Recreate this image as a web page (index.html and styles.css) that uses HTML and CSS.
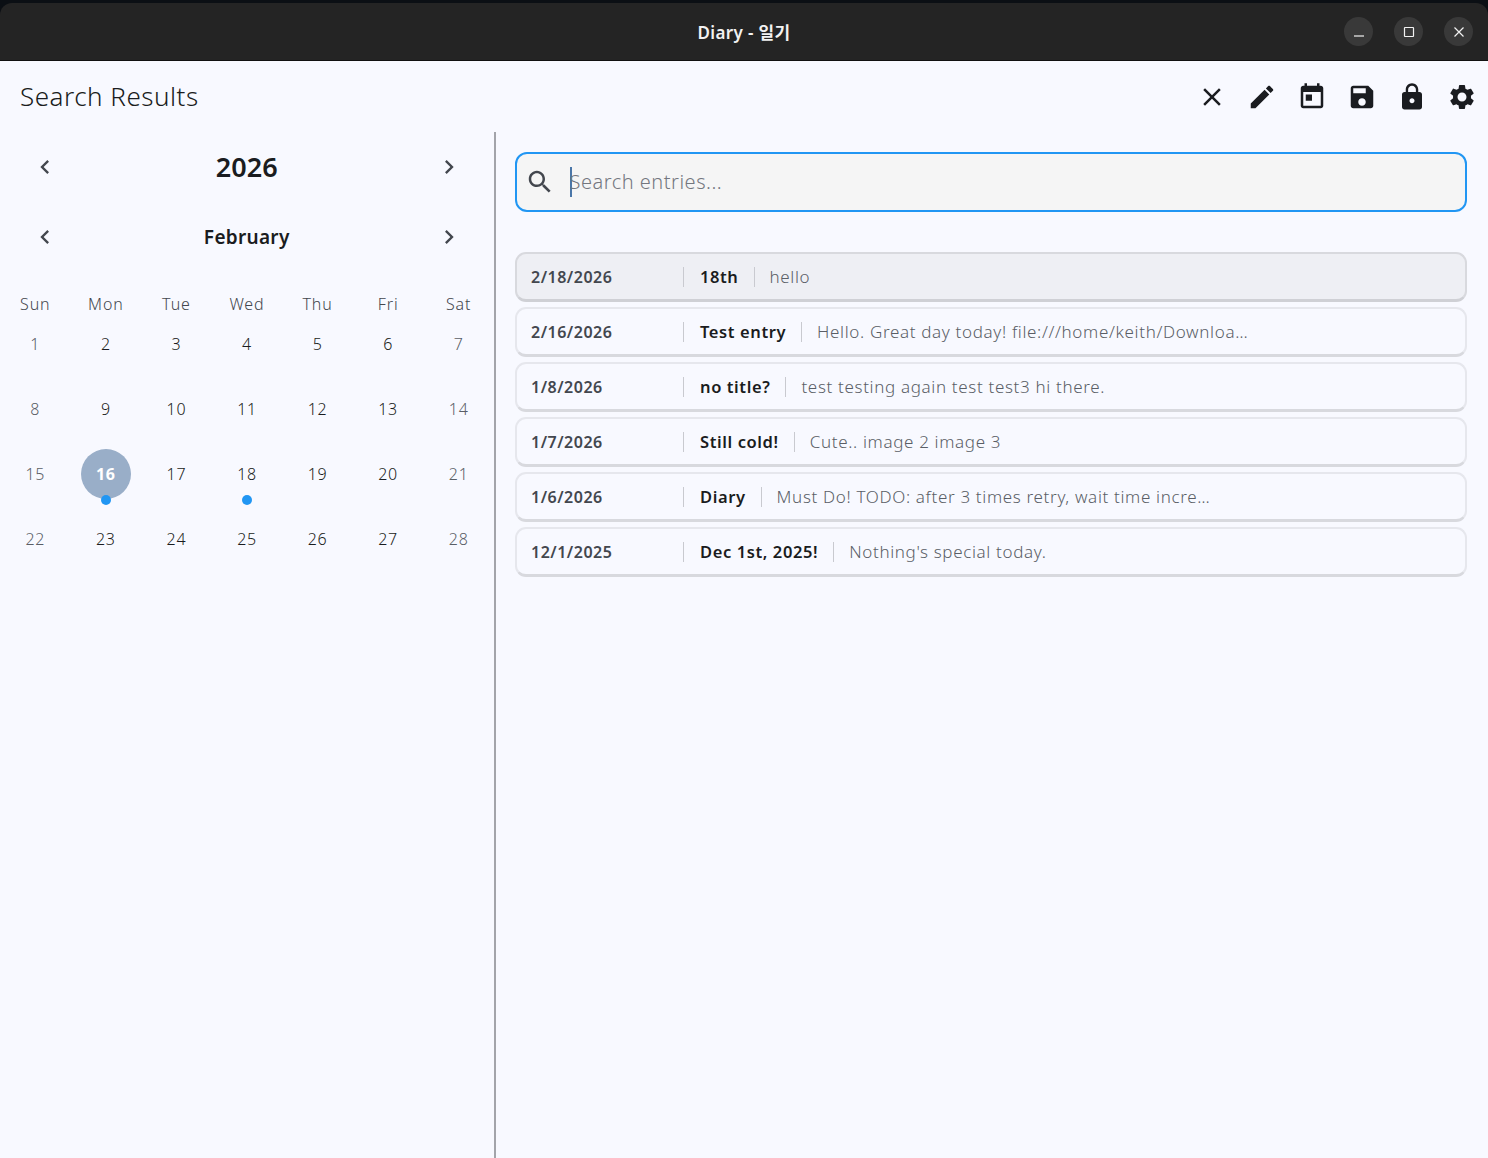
FILE: index.html
```html
<!DOCTYPE html>
<html lang="en">
<head>
<meta charset="utf-8">
<title>Diary - 일기</title>
<link rel="stylesheet" href="styles.css">
</head>
<body>
<div class="window">
  <header class="titlebar">
    <div class="titlebar-name">Diary - 일기</div>
    <div class="wm-buttons">
      <button class="wm-btn"><svg viewBox="0 0 16 16"><path d="M3 12h10" /></svg></button>
      <button class="wm-btn"><svg viewBox="0 0 16 16"><rect x="3.5" y="3.5" width="9" height="9" rx="0.5" /></svg></button>
      <button class="wm-btn"><svg viewBox="0 0 16 16"><path d="M3.5 3.5l9 9M12.5 3.5l-9 9" /></svg></button>
    </div>
  </header>
  <div class="appbar">
    <h1 class="appbar-title">Search Results</h1>
    <div class="actions">
      <svg class="icon" viewBox="0 0 24 24"><path d="M19 6.41L17.59 5 12 10.59 6.41 5 5 6.41 10.59 12 5 17.59 6.41 19 12 13.41 17.59 19 19 17.59 13.41 12z"/></svg>
      <svg class="icon" viewBox="0 0 24 24"><path d="M3 17.25V21h3.75L17.81 9.94l-3.75-3.75L3 17.25zM20.71 7.04c.39-.39.39-1.02 0-1.41l-2.34-2.34c-.39-.39-1.02-.39-1.41 0l-1.83 1.83 3.75 3.75 1.83-1.83z"/></svg>
      <svg class="icon" viewBox="0 0 24 24"><path d="M19 3h-1V1h-2v2H8V1H6v2H5c-1.11 0-1.99.9-1.99 2L3 19c0 1.1.89 2 2 2h14c1.1 0 2-.9 2-2V5c0-1.1-.9-2-2-2zm0 16H5V8h14v11zM7 10h5v5H7z"/></svg>
      <svg class="icon" viewBox="0 0 24 24"><path d="M17 3H5c-1.11 0-2 .9-2 2v14c0 1.1.89 2 2 2h14c1.1 0 2-.9 2-2V7l-4-4zm-5 16c-1.66 0-3-1.34-3-3s1.34-3 3-3 3 1.34 3 3-1.34 3-3 3zm3-10H5V5h10v4z"/></svg>
      <svg class="icon" viewBox="0 0 24 24"><path d="M18 8h-1V6c0-2.76-2.24-5-5-5S7 3.24 7 6v2H6c-1.1 0-2 .9-2 2v10c0 1.1.9 2 2 2h12c1.1 0 2-.9 2-2V10c0-1.1-.9-2-2-2zm-6 9c-1.1 0-2-.9-2-2s.9-2 2-2 2 .9 2 2-.9 2-2 2zm3.1-9H8.9V6c0-1.71 1.39-3.1 3.1-3.1 1.71 0 3.1 1.39 3.1 3.1v2z"/></svg>
      <svg class="icon" viewBox="0 0 24 24"><path d="M19.14 12.94c.04-.3.06-.61.06-.94 0-.32-.02-.64-.07-.94l2.03-1.58c.18-.14.23-.41.12-.61l-1.92-3.32c-.12-.22-.37-.29-.59-.22l-2.39.96c-.5-.38-1.03-.7-1.62-.94l-.36-2.54c-.04-.24-.24-.41-.48-.41h-3.84c-.24 0-.43.17-.47.41l-.36 2.54c-.59.24-1.13.57-1.62.94l-2.39-.96c-.22-.08-.47 0-.59.22L2.74 8.87c-.12.21-.08.47.12.61l2.03 1.58c-.05.3-.09.63-.09.94s.02.64.07.94l-2.03 1.58c-.18.14-.23.41-.12.61l1.92 3.32c.12.22.37.29.59.22l2.39-.96c.5.38 1.03.7 1.62.94l.36 2.54c.05.24.24.41.48.41h3.84c.24 0 .44-.17.47-.41l.36-2.54c.59-.24 1.13-.56 1.62-.94l2.39.96c.22.08.47 0 .59-.22l1.92-3.32c.12-.22.07-.47-.12-.61l-2.01-1.58zM12 15.6c-1.98 0-3.6-1.62-3.6-3.6s1.62-3.6 3.6-3.6 3.6 1.62 3.6 3.6-1.62 3.6-3.6 3.6z"/></svg>
    </div>
  </div>
  <main class="content">
    <aside class="calendar">
      <div class="cal-nav cal-year">
        <svg class="chevron" viewBox="0 0 24 24"><path d="M15.41 7.41L14 6l-6 6 6 6 1.41-1.41L10.83 12z"/></svg>
        <span>2026</span>
        <svg class="chevron" viewBox="0 0 24 24"><path d="M10 6L8.59 7.41 13.17 12l-4.58 4.59L10 18l6-6z"/></svg>
      </div>
      <div class="cal-nav cal-month">
        <svg class="chevron" viewBox="0 0 24 24"><path d="M15.41 7.41L14 6l-6 6 6 6 1.41-1.41L10.83 12z"/></svg>
        <span>February</span>
        <svg class="chevron" viewBox="0 0 24 24"><path d="M10 6L8.59 7.41 13.17 12l-4.58 4.59L10 18l6-6z"/></svg>
      </div>
      <div class="weekdays">
        <span>Sun</span><span>Mon</span><span>Tue</span><span>Wed</span><span>Thu</span><span>Fri</span><span>Sat</span>
      </div>
      <div class="days">
        <div class="day weekend"><span class="num">1</span></div>
        <div class="day"><span class="num">2</span></div>
        <div class="day"><span class="num">3</span></div>
        <div class="day"><span class="num">4</span></div>
        <div class="day"><span class="num">5</span></div>
        <div class="day"><span class="num">6</span></div>
        <div class="day weekend"><span class="num">7</span></div>
        <div class="day weekend"><span class="num">8</span></div>
        <div class="day"><span class="num">9</span></div>
        <div class="day"><span class="num">10</span></div>
        <div class="day"><span class="num">11</span></div>
        <div class="day"><span class="num">12</span></div>
        <div class="day"><span class="num">13</span></div>
        <div class="day weekend"><span class="num">14</span></div>
        <div class="day weekend"><span class="num">15</span></div>
        <div class="day selected"><span class="num">16</span><i class="dot"></i></div>
        <div class="day"><span class="num">17</span></div>
        <div class="day"><span class="num">18</span><i class="dot"></i></div>
        <div class="day"><span class="num">19</span></div>
        <div class="day"><span class="num">20</span></div>
        <div class="day weekend"><span class="num">21</span></div>
        <div class="day weekend"><span class="num">22</span></div>
        <div class="day"><span class="num">23</span></div>
        <div class="day"><span class="num">24</span></div>
        <div class="day"><span class="num">25</span></div>
        <div class="day"><span class="num">26</span></div>
        <div class="day"><span class="num">27</span></div>
        <div class="day weekend"><span class="num">28</span></div>
      </div>
    </aside>
    <section class="results">
      <div class="search">
        <svg class="search-icon" viewBox="0 0 24 24"><path d="M15.5 14h-.79l-.28-.27C15.41 12.59 16 11.11 16 9.5 16 5.91 13.09 3 9.5 3S3 5.91 3 9.5 5.91 16 9.5 16c1.61 0 3.09-.59 4.23-1.57l.27.28v.79l5 4.99L20.49 19l-4.99-5zm-6 0C7.01 14 5 11.99 5 9.5S7.01 5 9.5 5 14 7.01 14 9.5 11.99 14 9.5 14z"/></svg>
        <i class="caret"></i>
        <span class="placeholder">Search entries...</span>
      </div>
      <ul class="entries">
        <li class="entry active"><span class="date">2/18/2026</span><span class="title">18th</span><span class="snippet">hello</span></li>
        <li class="entry"><span class="date">2/16/2026</span><span class="title">Test entry</span><span class="snippet">Hello. Great day today! file:///home/keith/Downloa…</span></li>
        <li class="entry"><span class="date">1/8/2026</span><span class="title">no title?</span><span class="snippet">test testing again test test3 hi there.</span></li>
        <li class="entry"><span class="date">1/7/2026</span><span class="title">Still cold!</span><span class="snippet">Cute.. image 2 image 3</span></li>
        <li class="entry"><span class="date">1/6/2026</span><span class="title">Diary</span><span class="snippet">Must Do! TODO: after 3 times retry, wait time incre…</span></li>
        <li class="entry"><span class="date">12/1/2025</span><span class="title">Dec 1st, 2025!</span><span class="snippet">Nothing's special today.</span></li>
      </ul>
    </section>
  </main>
</div>
</body>
</html>
```
FILE: styles.css
```css
* { box-sizing: border-box; }
html, body { margin: 0; height: 100%; }
body {
  background: #0b0f14;
  font-family: "Noto Sans", "Noto Sans CJK KR", sans-serif;
  color: #1a1c20;
  overflow: hidden;
}
.window {
  height: 1158px;
  padding-top: 3px;
  display: flex;
  flex-direction: column;
}
.titlebar {
  height: 58px;
  flex: none;
  background: #242424;
  border-radius: 12px 12px 0 0;
  border-bottom: 1px solid #111;
  display: flex;
  align-items: center;
  justify-content: center;
  position: relative;
}
.titlebar-name {
  color: #f2f2f2;
  font-size: 17px;
  font-weight: 600;
  letter-spacing: 0.35px;
}
.wm-buttons {
  position: absolute;
  right: 15px;
  top: 14px;
  display: flex;
  gap: 21px;
}
.wm-btn {
  width: 29px;
  height: 29px;
  padding: 0;
  border: 0;
  border-radius: 50%;
  background: #393939;
  display: flex;
  align-items: center;
  justify-content: center;
}
.wm-btn svg {
  width: 16px;
  height: 16px;
  fill: none;
  stroke: #f2f2f2;
  stroke-width: 1.2;
}
.appbar {
  height: 71px;
  flex: none;
  background: #f8f9ff;
  display: flex;
  align-items: center;
  justify-content: space-between;
  padding: 0 11px 0 20px;
}
.appbar-title {
  margin: 0 0 2px;
  font-size: 26px;
  font-weight: 300;
  letter-spacing: 0.5px;
  color: #1a1c20;
}
.actions {
  display: flex;
  gap: 20px;
}
.icon {
  width: 30px;
  height: 30px;
  fill: #1a1c20;
  flex: none;
  display: block;
}
.chevron {
  width: 28px;
  height: 28px;
  margin-bottom: 1px;
  fill: #43474e;
  flex: none;
  display: block;
}
.content {
  flex: 1;
  display: flex;
  background: #f8f9ff;
  min-height: 0;
}
.calendar {
  width: 496px;
  flex: none;
  border-right: 2px solid #a3a4aa;
}
.cal-nav {
  display: flex;
  align-items: center;
  justify-content: space-between;
  padding: 0 31px 0 30.5px;
  height: 70px;
}
.cal-year span {
  margin-bottom: 2px;
  font-size: 27px;
  font-weight: 600;
}
.cal-month span {
  font-size: 19px;
  font-weight: 600;
  letter-spacing: 0.3px;
}
.weekdays {
  display: grid;
  grid-template-columns: repeat(7, 1fr);
  text-align: center;
  font-size: 16px;
  font-weight: 300;
  letter-spacing: 0.9px;
  color: #43474e;
  height: 30px;
  align-items: center;
  margin-top: 17px;
}
.days {
  display: grid;
  grid-template-columns: repeat(7, 1fr);
  grid-auto-rows: 65px;
}
.day {
  position: relative;
  display: flex;
  justify-content: center;
  align-items: flex-start;
  font-size: 16px;
  font-weight: 300;
  letter-spacing: 0.7px;
}
.weekend { color: #5a5e66; }
.num {
  width: 50px;
  height: 50px;
  border-radius: 50%;
  display: flex;
  align-items: center;
  justify-content: center;
}
.selected .num {
  background: #99aec8;
  color: #fff;
  font-weight: 700;
}
.dot {
  position: absolute;
  top: 46px;
  left: 50%;
  width: 10px;
  height: 10px;
  margin-left: -5px;
  border-radius: 50%;
  background: #2196f3;
}
.results {
  flex: 1;
  min-width: 0;
  padding: 20px 21px 0 19px;
}
.search {
  height: 60px;
  border: 2.5px solid #2196f3;
  border-radius: 12px;
  background: #f5f5f5;
  display: flex;
  align-items: center;
  padding-left: 7.5px;
}
.search-icon {
  width: 30px;
  height: 30px;
  fill: #43474e;
  flex: none;
}
.caret {
  width: 2px;
  height: 30px;
  margin-bottom: 1px;
  background: #4a76a8;
  margin-left: 15px;
  flex: none;
}
.placeholder {
  margin: 0 0 2px -2px;
  font-size: 20px;
  font-weight: 300;
  letter-spacing: 0.5px;
  color: #74777f;
}
.entries {
  list-style: none;
  margin: 40px 0 0;
  padding: 0;
  display: flex;
  flex-direction: column;
  gap: 5px;
}
.entry {
  height: 50px;
  border: 2px solid #e6e7ed;
  border-bottom: 3px solid #d8d9de;
  border-radius: 11px;
  display: flex;
  align-items: center;
  padding-left: 14px;
  background: #f8f9ff;
}
.entry.active {
  background: #eeeff4;
  border-color: #d8d9de;
  border-bottom-color: #cfd0d5;
}
.date {
  width: 152px;
  flex: none;
  font-size: 16px;
  font-weight: 600;
  letter-spacing: 0.5px;
  color: #43474e;
}
.title {
  font-size: 16.5px;
  font-weight: 600;
  letter-spacing: 0.6px;
  color: #1a1c20;
  padding: 0 15px 0 16px;
  border-left: 1px solid #c9cad0;
  border-right: 1px solid #c9cad0;
  line-height: 20px;
}
.snippet {
  padding-left: 15px;
  font-size: 17px;
  font-weight: 300;
  letter-spacing: 0.66px;
  color: #5a5e66;
}
```
